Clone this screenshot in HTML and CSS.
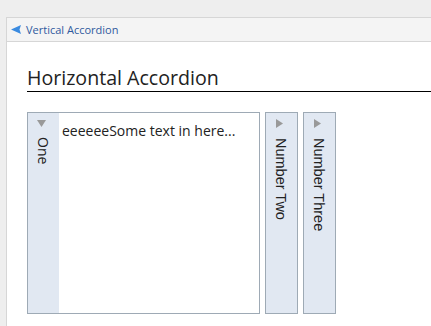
FILE: index.html
```html
<!DOCTYPE html>
<html>
<head>
<meta charset="utf-8">
<link rel="stylesheet" href="styles.css">
</head>
<body>
<div class="page">
  <div class="topbar">
    <a class="back" href="#">
      <svg class="back-icon" width="10" height="9" viewBox="0 0 10 9"><path d="M0 4.5 L10 0 L8.5 4.5 L10 9 Z" fill="#3b8be0"/></svg>
      <span>Vertical Accordion</span>
    </a>
  </div>
  <div class="content">
    <h2 class="title">Horizontal Accordion</h2>
    <div class="accordion">
      <div class="section open">
        <div class="handle">
          <svg class="tri" width="9" height="7" viewBox="0 0 9 7"><path d="M0 0 H9 L4.5 7 Z" fill="#999"/></svg>
          <span class="label">One</span>
        </div>
        <div class="body">eeeeeeSome text in here...</div>
      </div>
      <div class="section">
        <div class="handle">
          <svg class="tri tri-right" width="7" height="9" viewBox="0 0 7 9"><path d="M0 0 V9 L7 4.5 Z" fill="#999"/></svg>
          <span class="label alt">Number Two</span>
        </div>
      </div>
      <div class="section">
        <div class="handle">
          <svg class="tri tri-right" width="7" height="9" viewBox="0 0 7 9"><path d="M0 0 V9 L7 4.5 Z" fill="#999"/></svg>
          <span class="label alt">Number Three</span>
        </div>
      </div>
    </div>
  </div>
</div>
</body>
</html>
```

FILE: styles.css
```css
html, body {
  margin: 0;
  padding: 0;
  background: #eeeeee;
  height: 100%;
  overflow: hidden;
}
body {
  font-family: "Open Sans", "Liberation Sans", sans-serif;
  color: #333;
}
.page {
  margin: 17px 0 0 6px;
  background: #fff;
  border-top: 1px solid #d6d6d6;
  border-left: 1px solid #d6d6d6;
  height: 309px;
  box-sizing: border-box;
}
.topbar {
  height: 23px;
  background: #f4f4f4;
  border-bottom: 1px solid #d6d6d6;
  display: flex;
  align-items: center;
  padding-left: 4px;
}
.back {
  display: flex;
  align-items: center;
  gap: 5px;
  text-decoration: none;
  color: #2f5a9e;
  font-size: 11px;
}
.back-icon {
  display: block;
}
.content {
  padding: 22px 0 0 20px;
}
.title {
  margin: 0;
  font-weight: normal;
  font-size: 19.6px;
  line-height: 27px;
  color: #222;
  border-bottom: 1px solid #000;
}
.accordion {
  display: flex;
  gap: 5px;
  margin-top: 20px;
  height: 202px;
}
.section {
  display: flex;
  border: 1px solid #9eaab5;
  background: #e1e8f2;
}
.section.open {
  width: 231px;
}
.handle {
  width: 31px;
  display: flex;
  flex-direction: column;
  align-items: flex-start;
  padding: 7px 0 0 9px;
  box-sizing: border-box;
}
.tri {
  display: block;
  flex: none;
}
.tri-right {
  margin-left: 1px;
  margin-top: -1px;
}
.label {
  writing-mode: vertical-rl;
  font-size: 14px;
  line-height: 12px;
  margin-top: 10px;
  color: #222;
}
.label.alt {
  font-family: "Liberation Sans", Arial, sans-serif;
  font-size: 14.5px;
  margin-top: 10px;
}
.body {
  flex: 1;
  background: #fff;
  padding: 8px 0 0 3px;
  font-size: 14px;
  line-height: 20px;
  color: #222;
}
```
